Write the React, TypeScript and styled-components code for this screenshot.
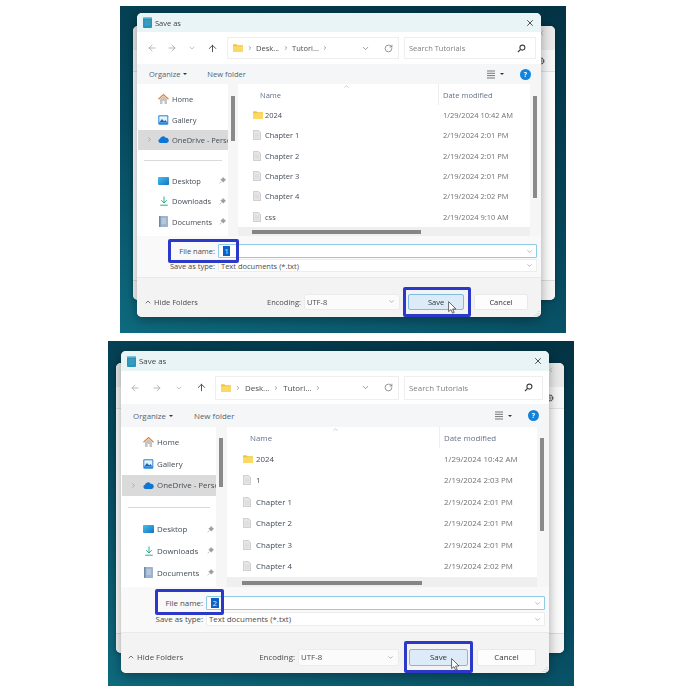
import React from "react";
import styled, { createGlobalStyle, css } from "styled-components";
import { ArrowLeft, ArrowRight, ArrowUp, ChevronDown, ChevronRight, ChevronUp, ChevronLeft, RotateCw, X } from "lucide-react";

type V = "a" | "b";

const Global = createGlobalStyle`
  html, body { margin: 0; padding: 0; background: #fff; }
  body { font-family: "Open Sans", "Liberation Sans", sans-serif; color: #444; }
  svg { flex-shrink: 0; }
`;

const vars = {
  a: css`
    --w: 404px; --rows: 19px 32px 20px 152px 41px 40px; --frame-w: 446px; --frame-h: 327px;
    --pad-top: 7px; --pad-left: 17px; --fs: 7.5px; --nav-w: 91px; --sb-w: 10px; --sb-right: 11px;
    --item: 20.4px; --nav-pad: 5px; --item-pad: 20px; --row: 20.3px; --nb: 20px; --nb-pad: 5px; --addr-gap: 5px;
    --search: 132px; --search-pad: 5px; --name-pad: 15px; --date-col: 92px;
    --thumb-left: 3px; --thumb-top: 12px; --thumb-h: 45px; --rthumb-h: 102px; --hthumb-left: 14px; --hthumb-w: 169px;
    --label-col: 78px; --field-pad: 8px; --field-h: 14px; --field2-h: 13px; --field-gap: 1px; --enc-w: 96px; --enc-gap: 3px;
    --btn-w: 56px; --btn2-w: 54px; --btn-h: 16px; --hide-pad: 7px; --new-gap: 20px; --org-pad: 12px; --btn-gap: 10px; --save-gap: 8px;
    --addr-h: 22px; --search-h: 22px; --cell-icon: 12px; --view-gap: 11px; --pin-left: 81px; --crumb-gap: 3.5px;
    --behind-left: -4px; --behind-top: 13px; --behind-right: -14px;
    margin: 6px 0 0 120px;
  `,
  b: css`
    --w: 428px; --rows: 20px 33px 23px 160px 45px 41px; --frame-w: 466px; --frame-h: 345px;
    --pad-top: 10px; --pad-left: 13px; --fs: 7.9px; --nav-w: 95px; --sb-w: 11px; --sb-right: 12px;
    --item: 21.8px; --nav-pad: 4px; --item-pad: 21px; --row: 21.5px; --nb: 22px; --nb-pad: 3px; --addr-gap: 3px;
    --search: 139px; --search-pad: 6px; --name-pad: 16px; --date-col: 98px;
    --thumb-left: 3px; --thumb-top: 11px; --thumb-h: 49px; --rthumb-h: 93px; --hthumb-left: 15px; --hthumb-w: 180px;
    --label-col: 82px; --field-pad: 9px; --field-h: 14px; --field2-h: 14px; --field-gap: 2px; --enc-w: 101px; --enc-gap: 3px;
    --btn-w: 59px; --btn2-w: 59px; --btn-h: 17px; --hide-pad: 6px; --new-gap: 21px; --org-pad: 12px; --btn-gap: 9px; --save-gap: 10px;
    --addr-h: 24px; --search-h: 24px; --cell-icon: 13px; --view-gap: 11px; --pin-left: 85px; --crumb-gap: 4px;
    --behind-left: -5px; --behind-top: 12px; --behind-right: -15px;
    margin: 8px 0 0 108px;
  `,
};

const Page = styled.div`
  width: 700px;
  height: 700px;
  overflow: hidden;
`;

const Frame = styled.section<{ $v: V }>`
  ${(p) => vars[p.$v]}
  position: relative;
  width: var(--frame-w);
  height: var(--frame-h);
  padding: var(--pad-top) 0 0 var(--pad-left);
  box-sizing: border-box;
  overflow: hidden;
  background: linear-gradient(20deg, #0e6a7e 0%, #07495e 45%, #033344 100%);
  font-size: var(--fs);
`;

const Behind = styled.div`
  position: absolute;
  left: calc(var(--pad-left) + var(--behind-left));
  top: calc(var(--pad-top) + var(--behind-top));
  width: calc(var(--w) - var(--behind-left) - var(--behind-right));
  height: calc(var(--frame-h) - var(--pad-top) - var(--behind-top) - 33px);
  border-radius: 5px;
  background: #f6f6f6;
  box-shadow: 0 1px 5px rgba(0, 0, 0, 0.3);
  display: grid;
  grid-template-rows: 24px 22px 1fr 20px;
  color: #777;
`;
const BehindHead = styled.div`
  background: #e9e9e9;
  border-radius: 5px 5px 0 0;
  display: flex;
  justify-content: flex-end;
  padding: 3px 9px 0 0;
  color: #aaa;
`;
const BehindRow = styled.div`
  background: #f6f6f6;
  border-bottom: 1px solid #e2e2e2;
  display: flex;
  justify-content: flex-end;
  align-items: center;
  padding-right: 9px;
`;
const BehindFill = styled.div`
  background: #fbfbfb;
`;
const BehindFoot = styled.div`
  background: #f4f4f4;
  border-top: 1px solid #dddddd;
  border-radius: 0 0 5px 5px;
`;

const Dialog = styled.div`
  position: relative;
  width: var(--w);
  display: grid;
  grid-template-rows: var(--rows);
  border-radius: 5px;
  overflow: hidden;
  background: #fff;
  box-shadow: 0 3px 12px rgba(0, 0, 0, 0.35);
  filter: blur(0.4px);
`;

const TitleBar = styled.header`
  background: #e9f4f6;
  display: flex;
  align-items: center;
  padding: 0 6px 0 6px;
  gap: 3px;
  color: #444;
`;
const TitleText = styled.span`
  flex: 1;
`;

const NavBar = styled.div`
  display: flex;
  align-items: center;
  padding-left: var(--nb-pad);
  background: #fff;
`;
const NavBtn = styled.span<{ $active?: boolean }>`
  width: var(--nb);
  display: flex;
  justify-content: center;
  color: ${(p) => (p.$active ? "#444" : "#a8a8a8")};
`;
const Address = styled.div`
  flex: 1;
  height: var(--addr-h);
  margin-left: var(--addr-gap);
  border: 1px solid #eeeeee;
  box-sizing: border-box;
  display: flex;
  align-items: center;
  padding: 0 5px 0 5px;
  gap: var(--crumb-gap);
  color: #4c4c4c;
`;
const Crumb = styled.span``;
const CrumbSep = styled.span`
  display: flex;
  color: #444;
`;
const AddrActions = styled.span`
  margin-left: auto;
  display: flex;
  align-items: center;
  gap: 14px;
  color: #777;
`;
const Search = styled.div`
  width: var(--search);
  height: var(--search-h);
  margin: 0 var(--search-pad) 0 5px;
  border: 1px solid #eeeeee;
  box-sizing: border-box;
  display: flex;
  align-items: center;
  justify-content: space-between;
  padding: 0 9px 0 4px;
  color: #808080;
`;

const ToolBar = styled.div`
  background: #f5f6f8;
  display: flex;
  align-items: center;
  padding: 0 var(--org-pad);
  color: #52626f;
`;
const Organize = styled.span`
  display: flex;
  align-items: center;
  gap: 3px;
  margin-right: var(--new-gap);
`;
const Caret = styled.span`
  width: 0;
  height: 0;
  border-left: 2px solid transparent;
  border-right: 2px solid transparent;
  border-top: 2px solid #333;
`;
const ToolRight = styled.span`
  margin-left: auto;
  display: flex;
  align-items: center;
  gap: 5px;
`;
const HelpBtn = styled.span`
  width: 11px;
  height: 11px;
  border-radius: 50%;
  background: #1283dc;
  color: #fff;
  font-size: 7px;
  font-weight: 700;
  display: flex;
  align-items: center;
  justify-content: center;
  margin-left: var(--view-gap);
  margin-right: -2px;
`;

const Body = styled.div`
  display: grid;
  grid-template-columns: var(--nav-w) var(--sb-w) 1fr;
  overflow: hidden;
`;
const Side = styled.nav`
  padding-top: var(--nav-pad);
  overflow: hidden;
`;
const SideItem = styled.div<{ $selected?: boolean }>`
  position: relative;
  height: var(--item);
  display: flex;
  align-items: center;
  gap: 3px;
  padding-left: var(--item-pad);
  white-space: nowrap;
  overflow: hidden;
  color: #454d58;
  margin-left: 1px;
  background: ${(p) => (p.$selected ? "#dadada" : "transparent")};
`;
const SideIcon = styled.span`
  width: 11px;
  display: flex;
  justify-content: center;
  flex-shrink: 0;
`;
const SideChevron = styled.span`
  position: absolute;
  left: 8px;
  display: flex;
  color: #888;
`;
const PinSlot = styled.span`
  position: absolute;
  left: var(--pin-left);
  display: flex;
`;
const SideDivider = styled.div`
  height: var(--item);
  display: flex;
  align-items: center;
  padding: 0 6px 0 7px;
  &::before {
    content: "";
    flex: 1;
    height: 1px;
    background: #d9d9d9;
  }
`;
const Track = styled.div`
  background: #f6f6f6;
  padding: var(--thumb-top) 0 0 var(--thumb-left);
`;
const Thumb = styled.div<{ $list?: boolean }>`
  width: 4px;
  height: ${(p) => (p.$list ? "var(--rthumb-h)" : "var(--thumb-h)")};
  background: #8a8a8a;
`;
const ListPane = styled.div`
  display: grid;
  grid-template-columns: 1fr var(--sb-right);
  min-width: 0;
`;
const List = styled.div`
  display: grid;
  grid-template-rows: 21px 1fr 11px;
  min-width: 0;
  overflow: hidden;
`;
const HeaderRow = styled.div`
  position: relative;
  display: grid;
  grid-template-columns: 1fr var(--date-col);
  align-items: center;
  color: #64728a;
`;
const NameHead = styled.span`
  padding-left: calc(var(--name-pad) + 7px);
`;
const DateHead = styled.span`
  border-left: 1px solid #eee;
  height: 100%;
  display: flex;
  align-items: center;
  padding-left: 4px;
`;
const SortMark = styled.span`
  position: absolute;
  left: 105px;
  top: -1px;
  display: flex;
  color: #aaa;
`;
const Rows = styled.div`
  overflow: hidden;
`;
const FileRow = styled.div`
  height: var(--row);
  display: grid;
  grid-template-columns: 1fr var(--date-col);
  align-items: center;
`;
const FileName = styled.span`
  display: flex;
  align-items: center;
  padding-left: var(--name-pad);
  color: #444c5a;
`;
const IconCell = styled.span`
  width: var(--cell-icon);
  display: flex;
`;
const FileDate = styled.span`
  padding-left: 5px;
  color: #75716e;
  white-space: nowrap;
`;
const HTrack = styled.div`
  background: #efefef;
  display: flex;
  align-items: center;
  padding-left: var(--hthumb-left);
`;
const HThumb = styled.div`
  width: var(--hthumb-w);
  height: 4px;
  background: #858585;
`;

const Fields = styled.div`
  background: #f9f9f9;
  padding: var(--field-pad) 4px 0 0;
  display: grid;
  grid-template-columns: var(--label-col) 1fr;
  grid-template-rows: var(--field-h) var(--field2-h);
  column-gap: 3px;
  row-gap: var(--field-gap);
  align-items: center;
`;
const FieldLabel = styled.label`
  text-align: right;
  color: #4c4c4c;
  white-space: nowrap;
`;
const FieldBox = styled.div<{ $focus?: boolean }>`
  height: 100%;
  box-sizing: border-box;
  background: #fff;
  display: flex;
  align-items: center;
  padding: 0 3px 0 2px;
  color: #4c4c4c;
  border: 1px solid ${(p) => (p.$focus ? "#8fcbe6" : "#ededed")};
  border-radius: 1px;
`;
const Selected = styled.span`
  background: #0b62c4;
  color: #dbeafe;
  padding: 0 1.5px;
  line-height: 10px;
  margin-left: 2px;
`;
const BoxChevron = styled.span`
  margin-left: auto;
  display: flex;
  color: #888;
`;

const Footer = styled.footer`
  position: relative;
  background: #f3f3f3;
  border-top: 1px solid #e9e9e9;
  display: flex;
  align-items: center;
  padding: 8px 13px 0 var(--hide-pad);
  box-sizing: border-box;
`;
const HideFolders = styled.span`
  display: flex;
  align-items: center;
  gap: 2px;
  color: #4c4c4c;
`;
const Encoding = styled.span`
  margin-left: auto;
  display: flex;
  align-items: center;
  gap: var(--enc-gap);
  margin-right: var(--save-gap);
  color: #4c4c4c;
`;
const EncodingBox = styled.span`
  width: var(--enc-w);
  height: var(--btn-h);
  box-sizing: border-box;
  background: #fbfbfb;
  border: 1px solid #ececec;
  border-radius: 2px;
  display: flex;
  align-items: center;
  padding: 0 4px 0 2px;
`;
const Button = styled.button<{ $primary?: boolean }>`
  width: ${(p) => (p.$primary ? "var(--btn-w)" : "var(--btn2-w)")};
  height: var(--btn-h);
  margin-left: ${(p) => (p.$primary ? "0" : "var(--btn-gap)")};
  padding: 0;
  font: inherit;
  color: #333;
  border-radius: 2px;
  background: ${(p) => (p.$primary ? "#dcebf7" : "#fdfdfd")};
  border: 1px solid ${(p) => (p.$primary ? "#7dbbe0" : "#e9e9e9")};
`;
const Grip = styled.svg`
  position: absolute;
  right: 1px;
  bottom: 1px;
`;

const Highlight = styled.div<{ $x: number; $y: number; $w: number; $h: number }>`
  position: absolute;
  left: ${(p) => p.$x}px;
  top: ${(p) => p.$y}px;
  width: ${(p) => p.$w}px;
  height: ${(p) => p.$h}px;
  box-sizing: border-box;
  border: 3px solid #2b38c8;
  border-radius: 2px;
`;
const Cursor = styled.svg<{ $x: number; $y: number }>`
  position: absolute;
  left: ${(p) => p.$x}px;
  top: ${(p) => p.$y}px;
`;

const Folder = () => (
  <svg width="10" height="8" viewBox="0 0 10 8">
    <path d="M0 1a.8.8 0 0 1 .8-.8h2.6l1 1H10V8H0z" fill="#f3c23c" />
    <path d="M0 2.2h10V8H0z" fill="#fbd965" />
  </svg>
);
const Doc = () => (
  <svg width="8" height="10" viewBox="0 0 8 10">
    <path d="M.4.4h5l2.2 2.2v7H.4z" fill="#e6e6e6" stroke="#bdbdbd" strokeWidth=".7" />
    <path d="M1.8 4h4.4M1.8 5.6h4.4M1.8 7.2h4.4" stroke="#cfcfcf" strokeWidth=".5" />
  </svg>
);
const HomeIcon = () => (
  <svg width="11" height="10" viewBox="0 0 11 10">
    <path d="M2 5v5h2.5V7h2v3H9V5L5.5 2z" fill="#c4c4c4" />
    <path d="M.5 5.2 5.5.6l5 4.6" fill="none" stroke="#e2843a" strokeWidth="1.3" />
  </svg>
);
const GalleryIcon = () => (
  <svg width="11" height="10" viewBox="0 0 11 10">
    <rect x=".3" y=".3" width="10" height="9.4" rx="1" fill="#2a88dd" />
    <rect x="1.3" y="1.3" width="8" height="6" fill="#e6f3fd" />
    <path d="M1.3 7.3 4 4l3 3.3zM5.5 7.3 7.3 5l2 2.3z" fill="#1a68b8" />
  </svg>
);
const CloudIcon = () => (
  <svg width="11" height="7" viewBox="0 0 11 7">
    <path d="M2.4 7A2.2 2.2 0 0 1 2 2.7 3 3 0 0 1 7.5 1.8 2.6 2.6 0 0 1 8.6 7z" fill="#0f74d2" />
  </svg>
);
const DesktopIcon = ({ id }: { id: string }) => (
  <svg width="11" height="8" viewBox="0 0 11 8">
    <defs>
      <linearGradient id={id} x1="0" y1="0" x2="1" y2="1">
        <stop offset="0" stopColor="#45c0e8" />
        <stop offset="1" stopColor="#1473c8" />
      </linearGradient>
    </defs>
    <rect width="11" height="8" rx=".8" fill={`url(#${id})`} />
  </svg>
);
const DownloadIcon = () => (
  <svg width="10" height="10" viewBox="0 0 10 10">
    <path d="M5 .5v6.2M2.2 4.2 5 7l2.8-2.8M1.2 9.2h7.6" fill="none" stroke="#2cae8c" strokeWidth="1" />
  </svg>
);
const DocumentsIcon = () => (
  <svg width="9" height="11" viewBox="0 0 9 11">
    <rect width="9" height="11" rx=".6" fill="#9db4cc" />
    <path d="M2.5 3h4.5M2.5 5h4.5M2.5 7h4.5" stroke="#e4ebf3" strokeWidth=".7" />
    <rect width="1.5" height="11" fill="#6f8aa8" />
  </svg>
);
const Pin = () => (
  <svg width="7" height="7" viewBox="0 0 7 7">
    <path d="M4 .4 6.6 3 5.6 3.4 4.4 5.2 1.8 2.6 3.6 1.4zM2.6 4.4.6 6.4" fill="#9c9c9c" stroke="#9c9c9c" strokeWidth=".6" />
  </svg>
);
const NotepadIcon = () => (
  <svg width="9" height="11" viewBox="0 0 9 11">
    <rect width="9" height="11" rx="1" fill="#2b93b8" />
    <rect y="0" width="9" height="1.5" fill="#7cc5dd" />
    <path d="M1.5 4h6M1.5 6h6M1.5 8h6" stroke="#5db3d0" strokeWidth=".6" />
  </svg>
);
const Magnifier = () => (
  <svg width="9" height="9" viewBox="0 0 9 9">
    <circle cx="5.4" cy="3.6" r="2.5" fill="none" stroke="#444" strokeWidth="1.1" />
    <path d="M3.6 5.4 1 8" stroke="#444" strokeWidth="1.3" />
  </svg>
);
const ViewIcon = () => (
  <svg width="8" height="9" viewBox="0 0 8 9">
    <path d="M0 1h8M0 3.3h8M0 5.6h8M0 8h8" stroke="#777" strokeWidth="1" />
  </svg>
);
const Gear = () => (
  <svg width="10" height="10" viewBox="0 0 10 10">
    <circle cx="5" cy="5" r="2.8" fill="none" stroke="#555" strokeWidth="1.4" strokeDasharray="1.6 .6" />
    <circle cx="5" cy="5" r="1.1" fill="none" stroke="#555" strokeWidth=".7" />
  </svg>
);

type Row = { name: string; date: string; folder?: boolean };

const rowsA: Row[] = [
  { name: "2024", date: "1/29/2024 10:42 AM", folder: true },
  { name: "Chapter 1", date: "2/19/2024 2:01 PM" },
  { name: "Chapter 2", date: "2/19/2024 2:01 PM" },
  { name: "Chapter 3", date: "2/19/2024 2:01 PM" },
  { name: "Chapter 4", date: "2/19/2024 2:02 PM" },
  { name: "css", date: "2/19/2024 9:10 AM" },
];
const rowsB: Row[] = [
  { name: "2024", date: "1/29/2024 10:42 AM", folder: true },
  { name: "1", date: "2/19/2024 2:03 PM" },
  { name: "Chapter 1", date: "2/19/2024 2:01 PM" },
  { name: "Chapter 2", date: "2/19/2024 2:01 PM" },
  { name: "Chapter 3", date: "2/19/2024 2:01 PM" },
  { name: "Chapter 4", date: "2/19/2024 2:02 PM" },
];

const CursorArrow = ({ x, y }: { x: number; y: number }) => (
  <Cursor $x={x} $y={y} width="9" height="13" viewBox="0 0 9 13">
    <path d="M.6.6v10l2.4-2 1.6 3.6 1.6-.7L4.6 8h3.4z" fill="#fff" stroke="#444" strokeWidth=".8" />
  </Cursor>
);

type ShotProps = {
  v: V;
  rows: Row[];
  value: string;
  file: [number, number, number, number];
  save: [number, number, number, number];
  cursor: [number, number];
};

const SaveDialog = ({ v, rows, value, file, save, cursor }: ShotProps) => (
  <Frame $v={v}>
    <Behind>
      <BehindHead>
        <ChevronLeft size={8} />
      </BehindHead>
      <BehindRow>
        <Gear />
      </BehindRow>
      <BehindFill />
      <BehindFoot />
    </Behind>
    <Dialog>
      <TitleBar>
        <NotepadIcon />
        <TitleText>Save as</TitleText>
        <X size={10} color="#333" />
      </TitleBar>
      <NavBar>
        <NavBtn><ArrowLeft size={10} /></NavBtn>
        <NavBtn><ArrowRight size={10} /></NavBtn>
        <NavBtn><ChevronDown size={8} /></NavBtn>
        <NavBtn $active><ArrowUp size={11} /></NavBtn>
        <Address>
          <Folder />
          <CrumbSep><ChevronRight size={6} /></CrumbSep>
          <Crumb>Desk...</Crumb>
          <CrumbSep><ChevronRight size={6} /></CrumbSep>
          <Crumb>Tutori...</Crumb>
          <CrumbSep><ChevronRight size={6} /></CrumbSep>
          <AddrActions>
            <ChevronDown size={9} />
            <RotateCw size={9} />
          </AddrActions>
        </Address>
        <Search>
          <span>Search Tutorials</span>
          <Magnifier />
        </Search>
      </NavBar>
      <ToolBar>
        <Organize>Organize <Caret /></Organize>
        <span>New folder</span>
        <ToolRight>
          <ViewIcon />
          <Caret />
          <HelpBtn>?</HelpBtn>
        </ToolRight>
      </ToolBar>
      <Body>
        <Side>
          <SideItem><SideIcon><HomeIcon /></SideIcon>Home</SideItem>
          <SideItem><SideIcon><GalleryIcon /></SideIcon>Gallery</SideItem>
          <SideItem $selected>
            <SideChevron><ChevronRight size={7} /></SideChevron>
            <SideIcon><CloudIcon /></SideIcon>OneDrive - Personal
          </SideItem>
          <SideDivider />
          <SideItem><SideIcon><DesktopIcon id={`desk-${v}`} /></SideIcon>Desktop<PinSlot><Pin /></PinSlot></SideItem>
          <SideItem><SideIcon><DownloadIcon /></SideIcon>Downloads<PinSlot><Pin /></PinSlot></SideItem>
          <SideItem><SideIcon><DocumentsIcon /></SideIcon>Documents<PinSlot><Pin /></PinSlot></SideItem>
        </Side>
        <Track><Thumb /></Track>
        <ListPane>
          <List>
            <HeaderRow>
              <NameHead>Name</NameHead>
              <DateHead>Date modified</DateHead>
              <SortMark><ChevronUp size={7} /></SortMark>
            </HeaderRow>
            <Rows>
              {rows.map((r) => (
                <FileRow key={r.name}>
                  <FileName>
                    <IconCell>{r.folder ? <Folder /> : <Doc />}</IconCell>
                    {r.name}
                  </FileName>
                  <FileDate>{r.date}</FileDate>
                </FileRow>
              ))}
            </Rows>
            <HTrack><HThumb /></HTrack>
          </List>
          <Track><Thumb $list /></Track>
        </ListPane>
      </Body>
      <Fields>
        <FieldLabel>File name:</FieldLabel>
        <FieldBox $focus>
          <Selected>{value}</Selected>
          <BoxChevron><ChevronDown size={7} /></BoxChevron>
        </FieldBox>
        <FieldLabel>Save as type:</FieldLabel>
        <FieldBox>
          Text documents (*.txt)
          <BoxChevron><ChevronDown size={7} /></BoxChevron>
        </FieldBox>
      </Fields>
      <Footer>
        <HideFolders><ChevronUp size={8} color="#333" />Hide Folders</HideFolders>
        <Encoding>
          Encoding:
          <EncodingBox>
            UTF-8
            <BoxChevron><ChevronDown size={7} /></BoxChevron>
          </EncodingBox>
        </Encoding>
        <Button $primary>Save</Button>
        <Button>Cancel</Button>
        <Grip width="6" height="6" viewBox="0 0 6 6">
          <path d="M5 1v.8M3 3v.8M5 3v.8M1 5v.8M3 5v.8M5 5v.8" stroke="#aaa" strokeWidth=".8" />
        </Grip>
      </Footer>
    </Dialog>
    <Highlight $x={file[0]} $y={file[1]} $w={file[2]} $h={file[3]} />
    <Highlight $x={save[0]} $y={save[1]} $w={save[2]} $h={save[3]} />
    <CursorArrow x={cursor[0]} y={cursor[1]} />
  </Frame>
);

export default function App() {
  return (
    <Page>
      <Global />
      <SaveDialog v="a" rows={rowsA} value="1" file={[48, 233, 71, 24]} save={[283, 281, 68, 30]} cursor={[328, 295]} />
      <SaveDialog v="b" rows={rowsB} value="2" file={[47, 248, 69, 26]} save={[296, 300, 69, 32]} cursor={[343, 317]} />
    </Page>
  );
}
